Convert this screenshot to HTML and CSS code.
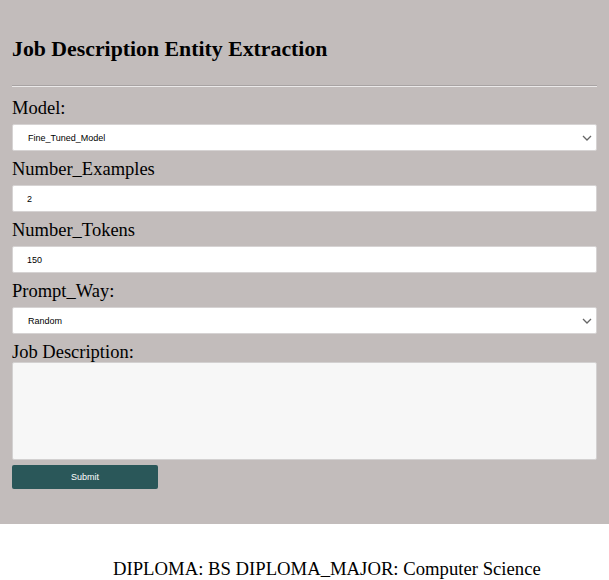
FILE: index.html
```html
<!DOCTYPE html>
<html>
<head>
<meta charset="utf-8">
<title>Job Description Entity Extraction</title>
<link rel="stylesheet" href="styles.css">
</head>
<body>
<div class="panel">
  <h2 class="title">Job Description Entity Extraction</h2>
  <hr class="rule">
  <form class="form">
    <label class="label" for="model">Model:</label>
    <select class="field select" id="model">
      <option>Fine_Tuned_Model</option>
    </select>
    <label class="label" for="examples">Number_Examples</label>
    <input class="field input" id="examples" type="text" value="2">
    <label class="label" for="tokens">Number_Tokens</label>
    <input class="field input" id="tokens" type="text" value="150">
    <label class="label" for="prompt">Prompt_Way:</label>
    <select class="field select" id="prompt">
      <option>Random</option>
    </select>
    <label class="label label-tight" for="desc">Job Description:</label>
    <textarea class="area" id="desc"></textarea>
    <button class="submit" type="button">Submit</button>
  </form>
</div>
<p class="result">DIPLOMA: BS DIPLOMA_MAJOR: Computer Science</p>
</body>
</html>
```
FILE: styles.css
```css
html, body {
  margin: 0;
  padding: 0;
  background: #ffffff;
}
body {
  font-family: "Liberation Serif", "Times New Roman", serif;
  color: #000;
}
.panel {
  background: #c2bcbb;
  padding: 1px 12px 35px;
}
.title {
  font-size: 21.8px;
  font-weight: bold;
  line-height: 25px;
  margin: 36px 0 23px;
}
.rule {
  margin: 0 0 11px;
  border: 0;
  border-top: 1px solid #a8a3a3;
  border-bottom: 1px solid #ebe9e9;
  height: 0;
}
.form {
  display: flex;
  flex-direction: column;
  align-items: stretch;
}
.label {
  font-size: 18.5px;
  line-height: 21px;
  margin-bottom: 5px;
}
.label-tight {
  line-height: 20px;
  margin-bottom: 0;
}
.field {
  box-sizing: border-box;
  height: 27px;
  margin: 0 0 8px;
  border: 1px solid #d6d3d3;
  border-radius: 2px;
  background: #ffffff;
  font-family: "Liberation Sans", Arial, sans-serif;
  font-size: 9px;
  color: #000;
}
.input {
  padding: 0 0 0 14px;
}
.select {
  -webkit-appearance: none;
  appearance: none;
  padding: 0 20px 0 15px;
  background-image: url("data:image/svg+xml,%3Csvg xmlns='http://www.w3.org/2000/svg' width='10' height='6' viewBox='0 0 10 6'%3E%3Cpath d='M1 1l4 4 4-4' fill='none' stroke='%23666' stroke-width='1.3'/%3E%3C/svg%3E");
  background-repeat: no-repeat;
  background-position: right 4px center;
  background-size: 10px 6px;
}
.area {
  box-sizing: border-box;
  height: 98px;
  margin: 0;
  border: 1px solid #d3d1d1;
  border-radius: 2px;
  background: #f7f7f7;
  resize: none;
}
.submit {
  box-sizing: border-box;
  align-self: flex-start;
  width: 146px;
  height: 24px;
  margin-top: 5px;
  border: 0;
  border-radius: 2px;
  background: #2a5759;
  color: #ffffff;
  font-family: "Liberation Sans", Arial, sans-serif;
  font-size: 9px;
}
.result {
  margin: 34px 0 0;
  padding-left: 113px;
  font-size: 18.7px;
  line-height: 21px;
}
```
